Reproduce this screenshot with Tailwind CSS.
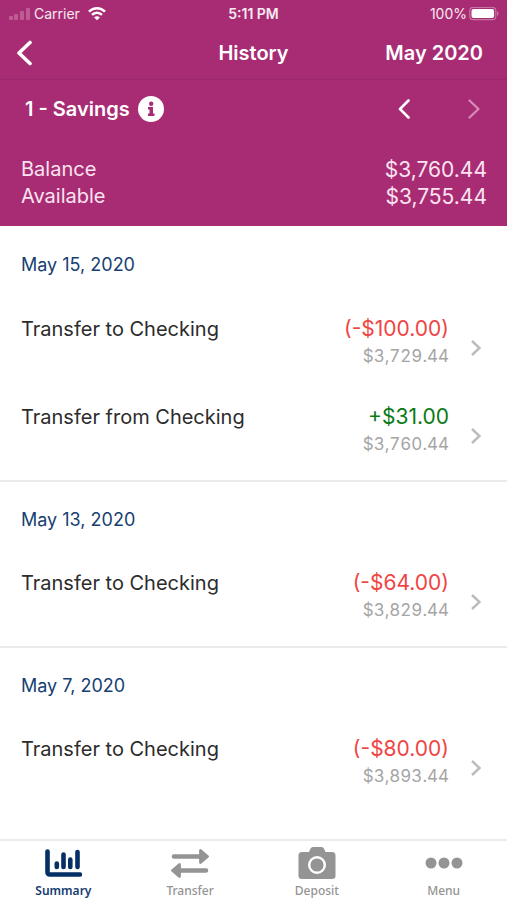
<!DOCTYPE html>
<html lang="en">
<head>
<meta charset="utf-8">
<meta name="viewport" content="width=device-width, initial-scale=1">
<title>History</title>
<script src="https://cdn.jsdelivr.net/npm/@tailwindcss/browser@4"></script>
</head>
<body class="flex min-h-screen flex-col bg-white font-['Inter','Liberation_Sans',sans-serif] text-[#2c2c2c]">
<header class="bg-[#a82c73] text-white">
  <div class="grid h-7 grid-cols-[1fr_auto_1fr] items-center px-2 text-sm leading-5 text-white/90">
    <div class="flex items-center gap-1">
      <svg class="h-3.5 w-[22px]" viewBox="0 0 22 14" fill="#bd5d94" aria-hidden="true"><rect x="1" y="9" width="4" height="4" rx="1"/><rect x="6" y="7" width="4" height="6" rx="1"/><rect x="12" y="4" width="4" height="9" rx="1"/><rect x="18" y="1" width="4" height="12" rx="1"/></svg>
      <span>Carrier</span>
      <svg class="ml-1 h-3.5 w-[18px]" viewBox="0 0 18 14" fill="none" stroke="#fff" stroke-width="2.500" aria-hidden="true"><path d="M1 4.700C5.500.1 12.500.1 17 4.700M4 7.900c2.900-2.900 7.100-2.900 10 0"/><path d="M9 13.300 6.100 10.400c1.700-1.600 4.100-1.600 5.800 0z" fill="#fff" stroke="none"/></svg>
    </div>
    <span class="font-semibold">5:11 PM</span>
    <div class="flex items-center justify-end gap-0.5">
      <span>100%</span>
      <svg class="h-3.5 w-[30px]" viewBox="0 0 30 14" aria-hidden="true"><rect x=".8" y=".3" width="26" height="12.400" rx="3.500" fill="none" stroke="#c674a3" stroke-width="1.200"/><rect x="2.500" y="2" width="22.600" height="9" rx="2" fill="#fff"/><path d="M28 4.300c2 .5 2 4 0 4.500z" fill="#c674a3"/></svg>
    </div>
  </div>
  <div class="grid h-[52px] grid-cols-[1fr_auto_1fr] items-center border-b border-[#9b2869] px-4 pb-0.5 text-xl leading-6 font-semibold">
    <button type="button" aria-label="Back" class="w-4"><svg class="h-[26px] w-4" viewBox="0 0 16 26" fill="none" stroke="#fff" stroke-width="3.600" stroke-linecap="round" stroke-linejoin="round"><path d="M14 2.500 3 13l11 10.500"/></svg></button>
    <h1>History</h1>
    <span class="pr-2 text-right">May 2020</span>
  </div>
  <div class="flex h-[58px] items-center pr-[27px] pl-[25px]">
    <h2 class="text-xl leading-6 font-semibold">1 - Savings</h2>
    <button type="button" aria-label="Account information" class="ml-2"><svg class="size-[26px]" viewBox="0 0 26 26"><circle cx="13" cy="13" r="13" fill="#fff"/><circle cx="13.200" cy="7.800" r="2.200" fill="#a82c73"/><path d="M10 11h5v6.500h1.500V20H10v-2.500h1.500v-4H10z" fill="#a82c73"/></svg></button>
    <div class="ml-auto flex gap-[58px]">
      <button type="button" aria-label="Previous account"><svg class="h-5 w-3" viewBox="0 0 12 20" fill="none" stroke="#fff" stroke-width="2.600" stroke-linecap="round" stroke-linejoin="round"><path d="M10.500 1.500 2 10l8.500 8.500"/></svg></button>
      <button type="button" aria-label="Next account"><svg class="h-5 w-3" viewBox="0 0 12 20" fill="none" stroke="#d98bb9" stroke-width="2.200" stroke-linecap="round" stroke-linejoin="round"><path d="M1.500 1.500 10.500 10l-9 8.500"/></svg></button>
    </div>
  </div>
  <dl class="grid grid-cols-[1fr_auto] pt-[18px] pr-5 pb-4 pl-[21px] text-xl leading-[27px] text-[#fbe3f1]">
    <dt>Balance</dt><dd class="text-right text-[21px] leading-[27px]">$3,760.44</dd>
    <dt>Available</dt><dd class="text-right text-[21px] leading-[27px]">$3,755.44</dd>
  </dl>
</header>
<main class="flex-1 pb-20">
  <section>
    <h3 class="flex h-[78px] items-center pl-[21px] text-lg leading-6 text-[#173f72]">May 15, 2020</h3>
    <a href="#" class="flex h-22 items-center pr-[26px] pl-[21px]">
      <span class="flex-1 self-start pt-3 text-xl leading-[26px]">Transfer to Checking</span>
      <span class="flex flex-col self-start pt-3 text-right"><span class="text-[21px] leading-[26px] text-[#f04444]">(-$100.00)</span><span class="text-[17px] leading-7 text-[#a5a5a5] tabular-nums">$3,729.44</span></span>
      <svg class="ml-[22px] h-4 w-2.5" viewBox="0 0 10 16" fill="none" stroke="#bcbcbc" stroke-width="2.400" aria-hidden="true"><path d="m1 1 7.500 7L1 15"/></svg>
    </a>
    <a href="#" class="flex h-22 items-center pr-[26px] pl-[21px]">
      <span class="flex-1 self-start pt-3 text-xl leading-[26px]">Transfer from Checking</span>
      <span class="flex flex-col self-start pt-3 text-right"><span class="text-[21px] leading-[26px] text-[#0b7a16]">+$31.00</span><span class="text-[17px] leading-7 text-[#a5a5a5] tabular-nums">$3,760.44</span></span>
      <svg class="ml-[22px] h-4 w-2.5" viewBox="0 0 10 16" fill="none" stroke="#bcbcbc" stroke-width="2.400" aria-hidden="true"><path d="m1 1 7.500 7L1 15"/></svg>
    </a>
  </section>
  <section>
    <h3 class="flex h-[78px] items-center border-t-2 border-[#ebebeb] pl-[21px] text-lg leading-6 text-[#173f72]">May 13, 2020</h3>
    <a href="#" class="flex h-22 items-center pr-[26px] pl-[21px]">
      <span class="flex-1 self-start pt-3 text-xl leading-[26px]">Transfer to Checking</span>
      <span class="flex flex-col self-start pt-3 text-right"><span class="text-[21px] leading-[26px] text-[#f04444]">(-$64.00)</span><span class="text-[17px] leading-7 text-[#a5a5a5] tabular-nums">$3,829.44</span></span>
      <svg class="ml-[22px] h-4 w-2.5" viewBox="0 0 10 16" fill="none" stroke="#bcbcbc" stroke-width="2.400" aria-hidden="true"><path d="m1 1 7.500 7L1 15"/></svg>
    </a>
  </section>
  <section>
    <h3 class="flex h-[78px] items-center border-t-2 border-[#ebebeb] pl-[21px] text-lg leading-6 text-[#173f72]">May 7, 2020</h3>
    <a href="#" class="flex h-22 items-center pr-[26px] pl-[21px]">
      <span class="flex-1 self-start pt-3 text-xl leading-[26px]">Transfer to Checking</span>
      <span class="flex flex-col self-start pt-3 text-right"><span class="text-[21px] leading-[26px] text-[#f04444]">(-$80.00)</span><span class="text-[17px] leading-7 text-[#a5a5a5] tabular-nums">$3,893.44</span></span>
      <svg class="ml-[22px] h-4 w-2.5" viewBox="0 0 10 16" fill="none" stroke="#bcbcbc" stroke-width="2.400" aria-hidden="true"><path d="m1 1 7.500 7L1 15"/></svg>
    </a>
  </section>
</main>
<nav class="fixed inset-x-0 bottom-0 grid grid-cols-4 border-t-2 border-[#ebebeb] bg-white pt-1.5 font-['Noto_Sans','Open_Sans',sans-serif] text-xs leading-4 font-medium text-[#949494]">
  <a href="#" aria-current="page" class="flex flex-col items-center gap-0.5 font-semibold text-[#153c72]">
    <svg class="h-[34px] w-[38px]" viewBox="0 0 38 34" fill="none" stroke="#062f66" stroke-linecap="round" stroke-linejoin="round" aria-hidden="true"><path d="M3.500 4.500v20.500q0 2.500 2.500 2.500H36" stroke-width="4.600"/><path d="M12.800 16.500v3.500M19.500 7.500V20M26.300 12.500V20M33.500 5V20" stroke-width="4.600"/></svg>
    <span>Summary</span>
  </a>
  <a href="#" class="flex flex-col items-center gap-0.5">
    <svg class="h-[34px] w-[38px]" viewBox="0 0 38 34" fill="#949494" stroke="#949494" stroke-linecap="round" stroke-linejoin="round" aria-hidden="true"><path d="M3 9.500h26M9 23.500h26" stroke-width="4.600"/><path d="M29.500 3.500v12l7-6zM8.500 17.500v12l-7-6z" stroke-width="2.800"/></svg>
    <span>Transfer</span>
  </a>
  <a href="#" class="flex flex-col items-center gap-0.5">
    <svg class="h-[34px] w-[38px]" viewBox="0 0 38 34" aria-hidden="true"><path d="M4 5h7l1.500-3.500Q13.200 0 15 0h8.500q1.800 0 2.500 1.500L27.500 5H34q3.500 0 3.500 3.500V29q0 3-3.500 3H4Q.5 32 .5 29V8.500Q.5 5 4 5z" fill="#949494"/><circle cx="19" cy="18" r="7.800" fill="none" stroke="#fff" stroke-width="2.400"/></svg>
    <span>Deposit</span>
  </a>
  <a href="#" class="flex flex-col items-center gap-0.5 pb-px">
    <svg class="h-[34px] w-[38px]" viewBox="0 0 38 34" fill="#949494" aria-hidden="true"><circle cx="6" cy="16" r="5.500"/><circle cx="19" cy="16" r="5.500"/><circle cx="32" cy="16" r="5.500"/></svg>
    <span>Menu</span>
  </a>
</nav>
</body>
</html>
